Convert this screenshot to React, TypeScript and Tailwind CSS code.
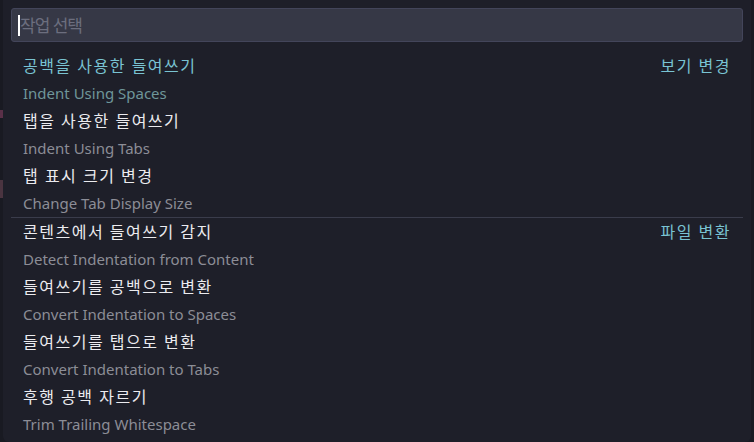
const FONT = "font-['Segoe_UI','Noto_Sans','Noto_Sans_CJK_KR',sans-serif]";

type Item = { ko: string; en: string; tag?: string; sep?: boolean };

const items: Item[] = [
  { ko: "공백을 사용한 들여쓰기", en: "Indent Using Spaces", tag: "보기 변경" },
  { ko: "탭을 사용한 들여쓰기", en: "Indent Using Tabs" },
  { ko: "탭 표시 크기 변경", en: "Change Tab Display Size" },
  { ko: "콘텐츠에서 들여쓰기 감지", en: "Detect Indentation from Content", tag: "파일 변환", sep: true },
  { ko: "들여쓰기를 공백으로 변환", en: "Convert Indentation to Spaces" },
  { ko: "들여쓰기를 탭으로 변환", en: "Convert Indentation to Tabs" },
  { ko: "후행 공백 자르기", en: "Trim Trailing Whitespace" },
];

export default function App() {
  return (
    <div className={`w-[754px] h-[442px] bg-[#191a22] flex ${FONT}`}>
      {/* editor gutter behind the picker */}
      <div className="w-[3px] flex flex-col">
        <div className="h-[110px]" />
        <div className="h-[8px] bg-[#5a3048]" />
        <div className="h-[62px]" />
        <div className="h-[18px] bg-[#4a3440]" />
      </div>

      <div className="flex-1 bg-[#1e1f29] rounded-b-md flex flex-col mr-[3px]">
        {/* input */}
        <div className="mx-2 mt-2 h-[34px] rounded-[3px] bg-[#363846] border border-[#43455a] flex items-center pl-[6px]">
          <span className="w-[2px] h-[21px] bg-white" />
          <span className="text-[17px] tracking-[-1px] text-[#6c6e7e] leading-none">작업 선택</span>
        </div>

        <div className="mt-[10px] flex flex-col">
          {items.map((it, i) => (
            <div key={i} className="flex flex-col">
              {it.sep && <div className="mx-2 h-px bg-[#3a3c4b]" />}
              <div className="h-[27px] flex items-center justify-between pr-5 pl-5 text-[16px] tracking-[1.5px]">
                <span className={i === 0 ? "text-[#79c3d2]" : "text-[#ebebef]"}>{it.ko}</span>
                {it.tag && <span className="text-[#79c3d2]">{it.tag}</span>}
              </div>
              <div className={`h-[28px] flex items-center pl-5 text-[15px] ${i === 0 ? "text-[#6f9699]" : "text-[#8c8d96]"}`}>
                {it.en}
              </div>
            </div>
          ))}
        </div>
      </div>
    </div>
  );
}
